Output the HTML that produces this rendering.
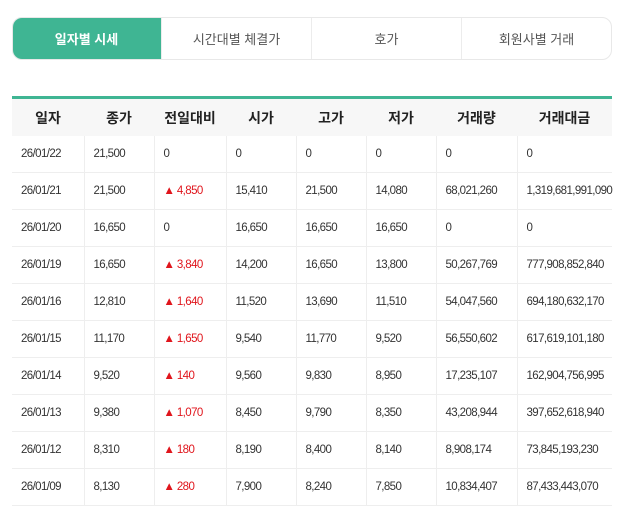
<!DOCTYPE html>
<html><head><meta charset="utf-8"><style>
body{margin:0;background:#fff;font-family:"Liberation Sans","Noto Sans CJK KR",sans-serif;}
.tabs{position:absolute;left:12px;top:17px;width:600px;height:43px;display:flex;border:1px solid #e8e8e8;border-radius:10px;box-sizing:border-box;overflow:hidden}
.tabs div{flex:1;display:flex;align-items:center;justify-content:center;font-size:13px;color:#555;border-left:1px solid #ececec}
.tabs div:first-child{border-left:none;background:#3fb593;color:#fff;font-weight:bold;border-radius:10px 0 0 0;margin:-1px 0 -1px -1px}
table{position:absolute;left:12px;top:96px;width:600px;border-collapse:collapse;border-top:3px solid #3fb593;table-layout:fixed}
th{background:#f7f7f7;height:37px;font-size:14px;font-weight:bold;color:#222;text-align:center;padding:0}
td{height:36px;font-size:11.5px;color:#333;padding:0 0 0 9px;border-bottom:1px solid #eee;border-left:1px solid #eee;letter-spacing:-0.6px;white-space:nowrap}
td:first-child{border-left:none}
.r{color:#e0151c}
</style></head><body>
<div class="tabs"><div>일자별 시세</div><div>시간대별 체결가</div><div>호가</div><div>회원사별 거래</div></div>
<table>
<colgroup><col style="width:72px"><col style="width:70px"><col style="width:72px"><col style="width:70px"><col style="width:70px"><col style="width:70px"><col style="width:81px"><col style="width:95px"></colgroup>
<tr><th>일자</th><th>종가</th><th>전일대비</th><th>시가</th><th>고가</th><th>저가</th><th>거래량</th><th>거래대금</th></tr>
<tr><td>26/01/22</td><td>21,500</td><td>0</td><td>0</td><td>0</td><td>0</td><td>0</td><td>0</td></tr>
<tr><td>26/01/21</td><td>21,500</td><td class="r">▲ 4,850</td><td>15,410</td><td>21,500</td><td>14,080</td><td>68,021,260</td><td>1,319,681,991,090</td></tr>
<tr><td>26/01/20</td><td>16,650</td><td>0</td><td>16,650</td><td>16,650</td><td>16,650</td><td>0</td><td>0</td></tr>
<tr><td>26/01/19</td><td>16,650</td><td class="r">▲ 3,840</td><td>14,200</td><td>16,650</td><td>13,800</td><td>50,267,769</td><td>777,908,852,840</td></tr>
<tr><td>26/01/16</td><td>12,810</td><td class="r">▲ 1,640</td><td>11,520</td><td>13,690</td><td>11,510</td><td>54,047,560</td><td>694,180,632,170</td></tr>
<tr><td>26/01/15</td><td>11,170</td><td class="r">▲ 1,650</td><td>9,540</td><td>11,770</td><td>9,520</td><td>56,550,602</td><td>617,619,101,180</td></tr>
<tr><td>26/01/14</td><td>9,520</td><td class="r">▲ 140</td><td>9,560</td><td>9,830</td><td>8,950</td><td>17,235,107</td><td>162,904,756,995</td></tr>
<tr><td>26/01/13</td><td>9,380</td><td class="r">▲ 1,070</td><td>8,450</td><td>9,790</td><td>8,350</td><td>43,208,944</td><td>397,652,618,940</td></tr>
<tr><td>26/01/12</td><td>8,310</td><td class="r">▲ 180</td><td>8,190</td><td>8,400</td><td>8,140</td><td>8,908,174</td><td>73,845,193,230</td></tr>
<tr><td>26/01/09</td><td>8,130</td><td class="r">▲ 280</td><td>7,900</td><td>8,240</td><td>7,850</td><td>10,834,407</td><td>87,433,443,070</td></tr>
</table>
</body></html>
